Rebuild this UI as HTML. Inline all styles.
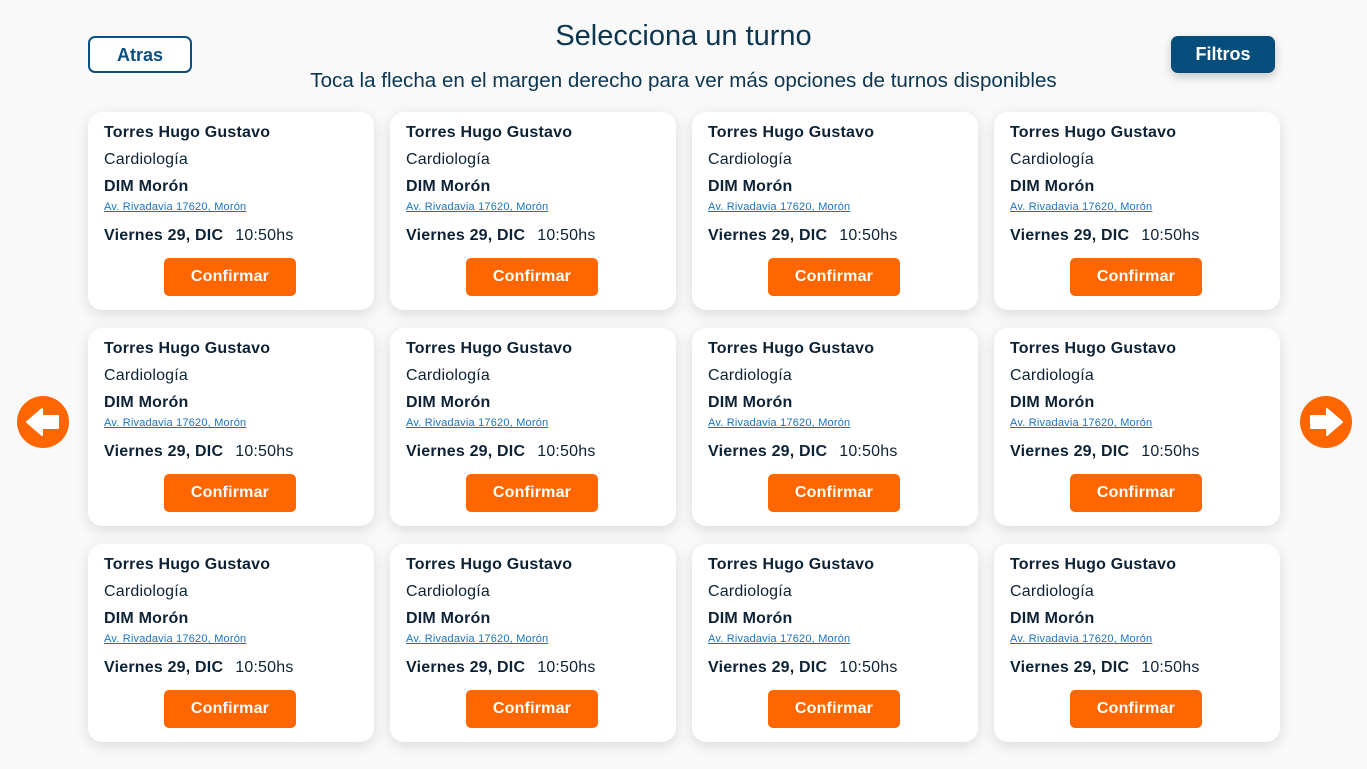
<!DOCTYPE html>
<html><head><meta charset="utf-8"><style>
*{margin:0;padding:0;box-sizing:border-box}
body{width:1367px;height:769px;background:#f9f9f9;font-family:"Liberation Sans",sans-serif;position:relative;overflow:hidden;color:#0d2235}
.t{position:absolute;left:0;width:1367px;text-align:center;color:#0c3550}
.btn{position:absolute;top:36px;width:104px;height:37px;border-radius:7px;font-weight:bold;font-size:18px;text-align:center;line-height:35px}
.card{position:absolute;width:286px;height:198px;background:#fff;border-radius:14px;box-shadow:0 4px 14px rgba(0,0,0,.12)}
.card div{position:absolute;left:16px;white-space:nowrap;letter-spacing:0.2px}
.n{top:12px;font-weight:bold;font-size:16px}
.c{top:39px;font-size:16px}
.d{top:66px;font-weight:bold;font-size:16px}
.a{top:89px;font-size:11px;color:#1a73c0;text-decoration:underline}
.f{top:115px;font-size:16px}
.f b{margin-right:12px}
.cb{position:absolute;top:146px;left:76px !important;width:132px;height:38px;background:#ff6600;border-radius:5px;color:#fff;font-weight:bold;font-size:16px;text-align:center;line-height:38px}
.arr{position:absolute;top:396px;width:52px;height:52px;border-radius:50%;background:#ff6600}
</style></head><body>
<div class="t" style="top:20px;font-size:29px">Selecciona un turno</div>
<div class="t" style="top:69px;font-size:20.6px">Toca la flecha en el margen derecho para ver más opciones de turnos disponibles</div>
<div class="btn" style="left:88px;border:2px solid #0b5080;color:#0b5080;background:#fff">Atras</div>
<div class="btn" style="left:1171px;background:#054d7a;color:#fff;line-height:37px;box-shadow:0 4px 10px rgba(0,0,0,.2)">Filtros</div>
<div class="arr" style="left:17px"><svg width="52" height="52" viewBox="0 0 52 52"><path d="M10 26 L25 13 V20 H41 V32 H25 V39 Z" fill="#fff" stroke="#fff" stroke-linejoin="round" stroke-width="2"/></svg></div>
<div class="arr" style="left:1300px"><svg width="52" height="52" viewBox="0 0 52 52"><path d="M42 26 L27 13 V20 H11 V32 H27 V39 Z" fill="#fff" stroke="#fff" stroke-linejoin="round" stroke-width="2"/></svg></div>
<div id="g"></div>
<script>
var h='';[112,328,544].forEach(function(y){[88,390,692,994].forEach(function(x){
h+='<div class="card" style="left:'+x+'px;top:'+y+'px"><div class="n">Torres Hugo Gustavo</div><div class="c">Cardiología</div><div class="d">DIM Morón</div><div class="a">Av. Rivadavia 17620, Morón</div><div class="f"><b>Viernes 29, DIC</b>10:50hs</div><div class="cb">Confirmar</div></div>';});});
document.getElementById('g').innerHTML=h;
</script>
</body></html>
